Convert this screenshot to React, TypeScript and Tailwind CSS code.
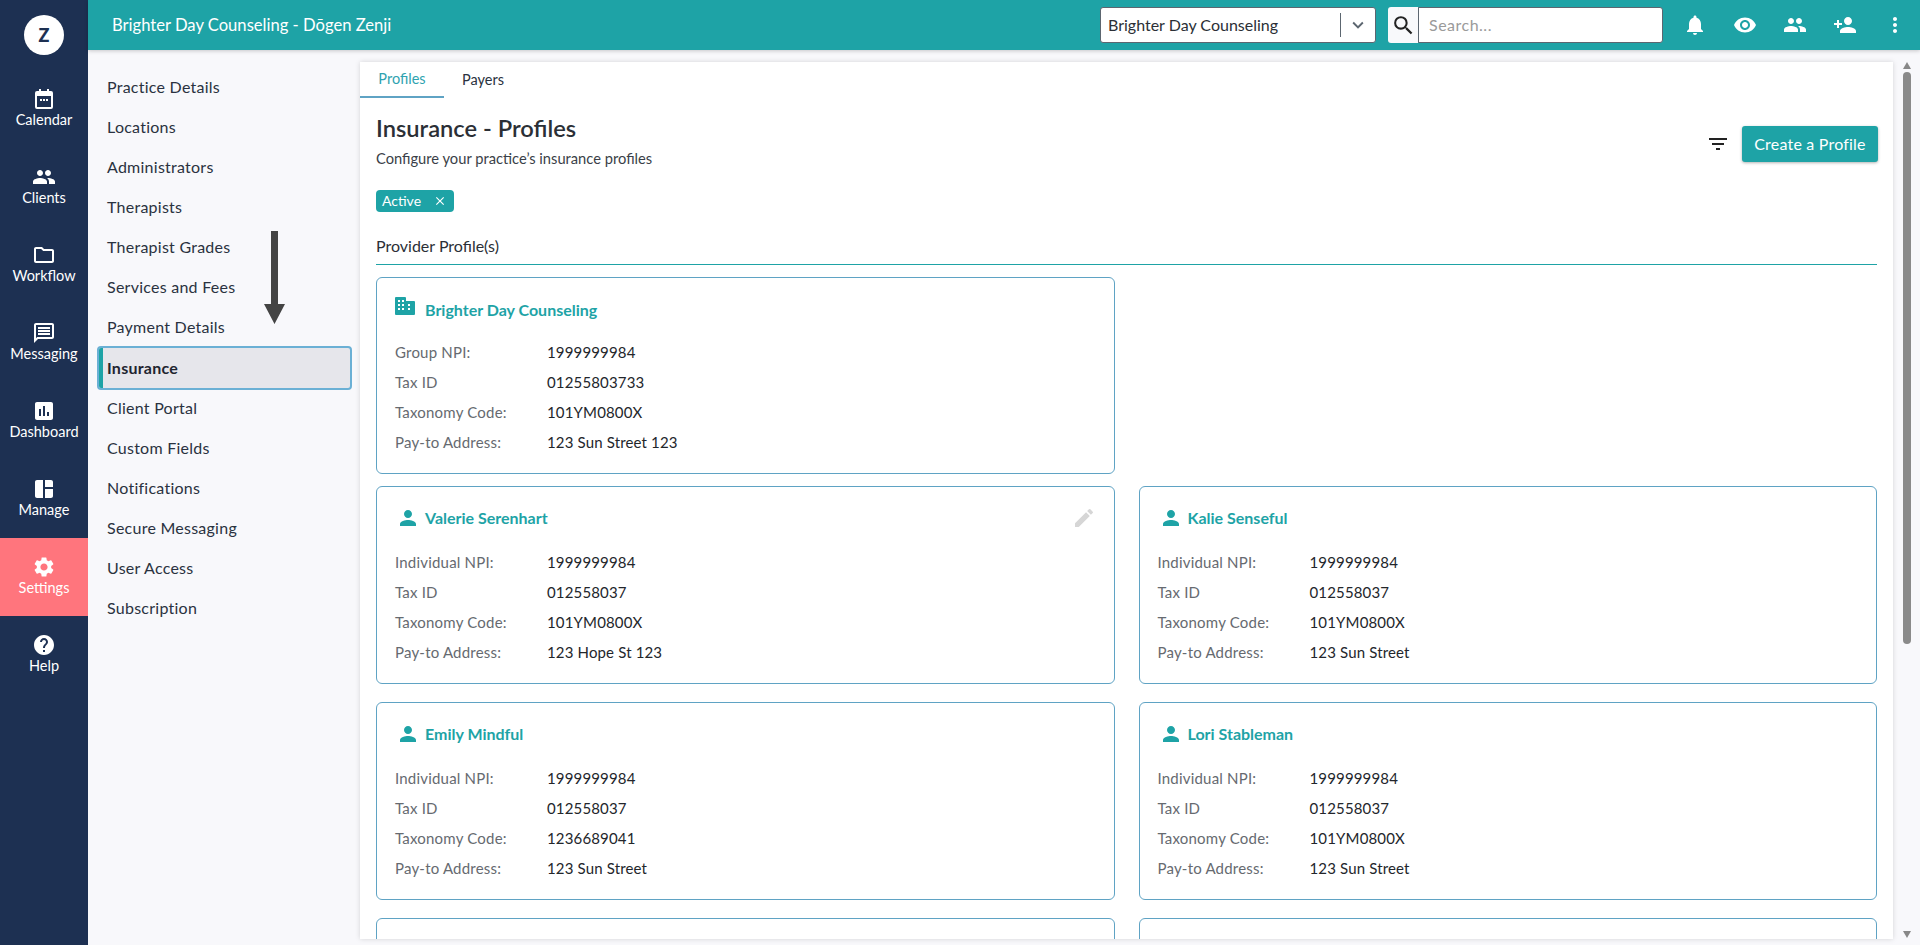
import type { ReactNode } from 'react';
import {
  MdPeople,
  MdOutlineFolder,
  MdOutlineMessage,
  MdAssessment,
  MdSpaceDashboard,
  MdSettings,
  MdHelp,
  MdNotifications,
  MdVisibility,
  MdPersonAdd,
  MdMoreVert,
  MdSearch,
  MdFilterList,
  MdEdit,
  MdPerson,
  MdClose,
  MdKeyboardArrowDown,
} from 'react-icons/md';

function CalendarIcon() {
  return (
    <svg width="24" height="24" viewBox="0 0 24 24" fill="currentColor">
      <path
        fillRule="evenodd"
        d="M7 2h2v2h6V2h2v2h2a2 2 0 0 1 2 2v14a2 2 0 0 1-2 2H5a2 2 0 0 1-2-2V6a2 2 0 0 1 2-2h2zM5 9v11h14V9zM8 12h2v2H8zM11 12h2v2h-2zM14 12h2v2h-2z"
      />
    </svg>
  );
}

function BuildingIcon() {
  return (
    <svg className="mt-[-8px] mr-[10px]" width="20" height="18" viewBox="0 0 20 18" fill="#1ea3a6">
      <path
        fillRule="evenodd"
        d="M1 0h9a1 1 0 0 1 1 1v3h8a1 1 0 0 1 1 1v12a1 1 0 0 1-1 1H1a1 1 0 0 1-1-1V1a1 1 0 0 1 1-1zM3 3v2h2V3zM7 3v2h2V3zM3 7v2h2V7zM7 7v2h2V7zM3 11v2h2v-2zM7 11v2h2v-2zM13 7v2h2V7zM13 11v2h2v-2z"
      />
    </svg>
  );
}

const navItems = [
  { label: 'Calendar', icon: <CalendarIcon /> },
  { label: 'Clients', icon: <MdPeople /> },
  { label: 'Workflow', icon: <MdOutlineFolder /> },
  { label: 'Messaging', icon: <MdOutlineMessage /> },
  { label: 'Dashboard', icon: <MdAssessment /> },
  { label: 'Manage', icon: <MdSpaceDashboard /> },
  { label: 'Settings', icon: <MdSettings />, active: true },
  { label: 'Help', icon: <MdHelp /> },
];

const settingsItems = [
  'Practice Details',
  'Locations',
  'Administrators',
  'Therapists',
  'Therapist Grades',
  'Services and Fees',
  'Payment Details',
  'Insurance',
  'Client Portal',
  'Custom Fields',
  'Notifications',
  'Secure Messaging',
  'User Access',
  'Subscription',
];

function Row({ label, value }: { label: string; value: string }) {
  return (
    <div className="flex h-[30px] items-center">
      <span className="w-[152px] tracking-[0.2px] text-[#666a70]">{label}</span>
      <span className="tracking-[0.15px] text-[#23262b]">{value}</span>
    </div>
  );
}

function ProfileCard({
  name,
  npi,
  taxId,
  code,
  address,
  edit,
}: {
  name: string;
  npi: string;
  taxId: string;
  code: string;
  address: string;
  edit?: boolean;
}) {
  return (
    <div className="h-[198px] rounded-md border border-[#5fa3c4] bg-white px-[18px] pt-[18px]">
      <div className="flex h-[26px] items-center">
        <MdPerson className="mr-[5px] ml-[1px] text-[24px] text-[#1ea3a6]" />
        <span className="text-[16px] font-bold text-[#1ea3a6]">{name}</span>
        {edit && <MdEdit className="ml-auto text-[24px] text-[#d6d6d6]" />}
      </div>
      <div className="mt-[16px]">
        <Row label="Individual NPI:" value={npi} />
        <Row label="Tax ID" value={taxId} />
        <Row label="Taxonomy Code:" value={code} />
        <Row label="Pay-to Address:" value={address} />
      </div>
    </div>
  );
}

function HeaderIcon({ children }: { children: ReactNode }) {
  return <div className="flex w-[50px] items-center justify-center text-[24px] text-white">{children}</div>;
}

export default function App() {
  return (
    <div className="flex h-screen overflow-hidden bg-[#f8f8fb] font-['Lato','Liberation_Sans',sans-serif] text-[15px] text-[#2a3240]">
      {/* left rail */}
      <aside className="w-[88px] shrink-0 bg-[#1d3052] text-white">
        <div className="flex h-[70px] items-center justify-center">
          <div className="flex h-10 w-10 items-center justify-center rounded-full bg-white text-[18px] font-black text-[#1d3052]">Z</div>
        </div>
        {navItems.map((n) => (
          <div
            key={n.label}
            className={`flex h-[78px] flex-col items-center justify-center pb-[2px] ${n.active ? 'bg-[#ff757d]' : ''}`}
          >
            <span className="text-[24px]">{n.icon}</span>
            <span className="text-[14.500px] leading-[18px]">{n.label}</span>
          </div>
        ))}
      </aside>

      <div className="flex min-w-0 flex-1 flex-col">
        <header className="z-10 flex h-[50px] shrink-0 items-center bg-[#1ea3a6] pl-6 shadow-[0_1px_4px_rgba(0,0,0,0.2)]">
          <span className="text-[16.600px] text-white">Brighter Day Counseling - Dōgen Zenji</span>
          <div className="ml-auto flex h-9 w-[276px] items-center rounded-[3px] border border-[#5c6670] bg-white pl-[7px] text-[16px] text-[#2b2f36]">
            <span>Brighter Day Counseling</span>
            <span className="ml-auto h-6 w-px bg-[#5c6670]" />
            <MdKeyboardArrowDown className="mx-[6px] text-[22px] text-[#5c6670]" />
          </div>
          <div className="ml-3 flex h-9 w-[30px] items-center justify-center rounded-l-[3px] bg-[#f8f9fb]">
            <MdSearch className="text-[25px] text-[#222]" />
          </div>
          <div className="flex h-9 w-[245px] items-center rounded-r-[3px] border border-[#5c6670] bg-white pl-[10px] text-[16px] tracking-[0.5px] text-[#9a9a9a]">
            Search...
          </div>
          <div className="ml-[7px] flex h-full">
            <HeaderIcon><MdNotifications /></HeaderIcon>
            <HeaderIcon><MdVisibility /></HeaderIcon>
            <HeaderIcon><MdPeople /></HeaderIcon>
            <HeaderIcon><MdPersonAdd /></HeaderIcon>
            <HeaderIcon><MdMoreVert /></HeaderIcon>
          </div>
        </header>

        <div className="flex min-h-0 flex-1 pb-[6px]">
          {/* settings menu */}
          <nav className="relative w-[272px] shrink-0 pt-[17px] pr-2 pl-[9px] text-[16px] tracking-[0.25px]">
            {settingsItems.map((s) =>
              s === 'Insurance' ? (
                <div
                  key={s}
                  className="mt-[-1px] flex h-11 items-center overflow-hidden rounded-[4px] border-2 border-[#6bb0d5] bg-[#e6e6eb] font-bold text-[#1f2530]"
                >
                  <span className="mr-[4px] h-full w-[4px] bg-[#1ea3a6]" />
                  {s}
                </div>
              ) : (
                <div key={s} className={`flex h-10 items-center pl-[10px] ${s === 'Client Portal' ? 'mt-[-2px]' : ''}`}>
                  {s}
                </div>
              ),
            )}
            <svg className="absolute top-[181px] left-[176px]" width="21" height="93" viewBox="0 0 21 93">
              <path d="M7 0h7v73h7L10.500 93 0 73h7z" fill="#444" />
            </svg>
          </nav>

          {/* content panel */}
          <main className="mt-3 min-w-0 flex-1 overflow-hidden bg-white shadow-[0_0_5px_rgba(0,0,0,0.15)]">
            <div className="flex h-9 text-[14.500px]">
              <div className="flex w-[84px] items-center justify-center border-b-2 border-[#5fa3c4] pb-[1px] text-[#2fa3b0]">Profiles</div>
              <div className="ml-[18px] flex items-center pb-[1px]">Payers</div>
            </div>
            <div className="px-4">
              <div className="mt-4 flex items-center justify-between">
                <div>
                  <h1 className="text-[23.700px] leading-[28px] font-semibold text-[#2b2f36]">Insurance - Profiles</h1>
                  <p className="mt-[6px] text-[14.700px] leading-5 text-[#3a3f48]">Configure your practice&rsquo;s insurance profiles</p>
                </div>
                <div className="mt-[6px] mr-[-1px] flex items-center">
                  <MdFilterList className="text-[24px] text-[#222]" />
                  <div className="ml-[12px] flex h-9 w-[136px] items-center justify-center rounded-[3px] bg-[#1ea3a6] text-[16px] tracking-[0.2px] text-white shadow-[0_1px_3px_rgba(0,0,0,0.3)]">
                    Create a Profile
                  </div>
                </div>
              </div>
              <div className="mt-[22px] flex h-[22px] w-[78px] items-center rounded-[4px] bg-[#1ea3a6] pb-[1px] pl-[6px] text-[14px] text-white">
                Active
                <MdClose className="mt-[1px] ml-[12px] text-[14px]" />
              </div>
              <div className="mt-6 border-b border-[#1ea3a6] pb-[9px] text-[16px] leading-[19px] text-[#2b2f36]">Provider Profile(s)</div>

              <div className="mt-3 grid grid-cols-2 gap-x-6">
                <div className="h-[197px] rounded-md border border-[#5fa3c4] bg-white px-[18px] pt-[19px]">
                  <div className="flex h-[26px] items-center">
                    <BuildingIcon />
                    <span className="text-[16px] font-bold text-[#1ea3a6]">Brighter Day Counseling</span>
                  </div>
                  <div className="mt-[14px]">
                    <Row label="Group NPI:" value="1999999984" />
                    <Row label="Tax ID" value="01255803733" />
                    <Row label="Taxonomy Code:" value="101YM0800X" />
                    <Row label="Pay-to Address:" value="123 Sun Street 123" />
                  </div>
                </div>
                <div />
              </div>

              <div className="mt-3 grid grid-cols-2 gap-x-6 gap-y-[18px]">
                <ProfileCard name="Valerie Serenhart" npi="1999999984" taxId="012558037" code="101YM0800X" address="123 Hope St 123" edit />
                <ProfileCard name="Kalie Senseful" npi="1999999984" taxId="012558037" code="101YM0800X" address="123 Sun Street" />
                <ProfileCard name="Emily Mindful" npi="1999999984" taxId="012558037" code="1236689041" address="123 Sun Street" />
                <ProfileCard name="Lori Stableman" npi="1999999984" taxId="012558037" code="101YM0800X" address="123 Sun Street" />
                <div className="h-[198px] rounded-md border border-[#5fa3c4] bg-white" />
                <div className="h-[198px] rounded-md border border-[#5fa3c4] bg-white" />
              </div>
            </div>
          </main>

          {/* scrollbar */}
          <div className="mt-3 flex w-[27px] shrink-0 flex-col items-center">
            <svg className="mt-[-1px]" width="10" height="10" viewBox="0 0 10 10"><path d="M5 1l4 7H1z" fill="#888" /></svg>
            <div className="mt-[1px] h-[572px] w-2 rounded-full bg-[#8a8a8a]" />
            <svg className="mt-auto" width="10" height="10" viewBox="0 0 10 10"><path d="M5 9L1 2h8z" fill="#888" /></svg>
          </div>
        </div>
      </div>
    </div>
  );
}
